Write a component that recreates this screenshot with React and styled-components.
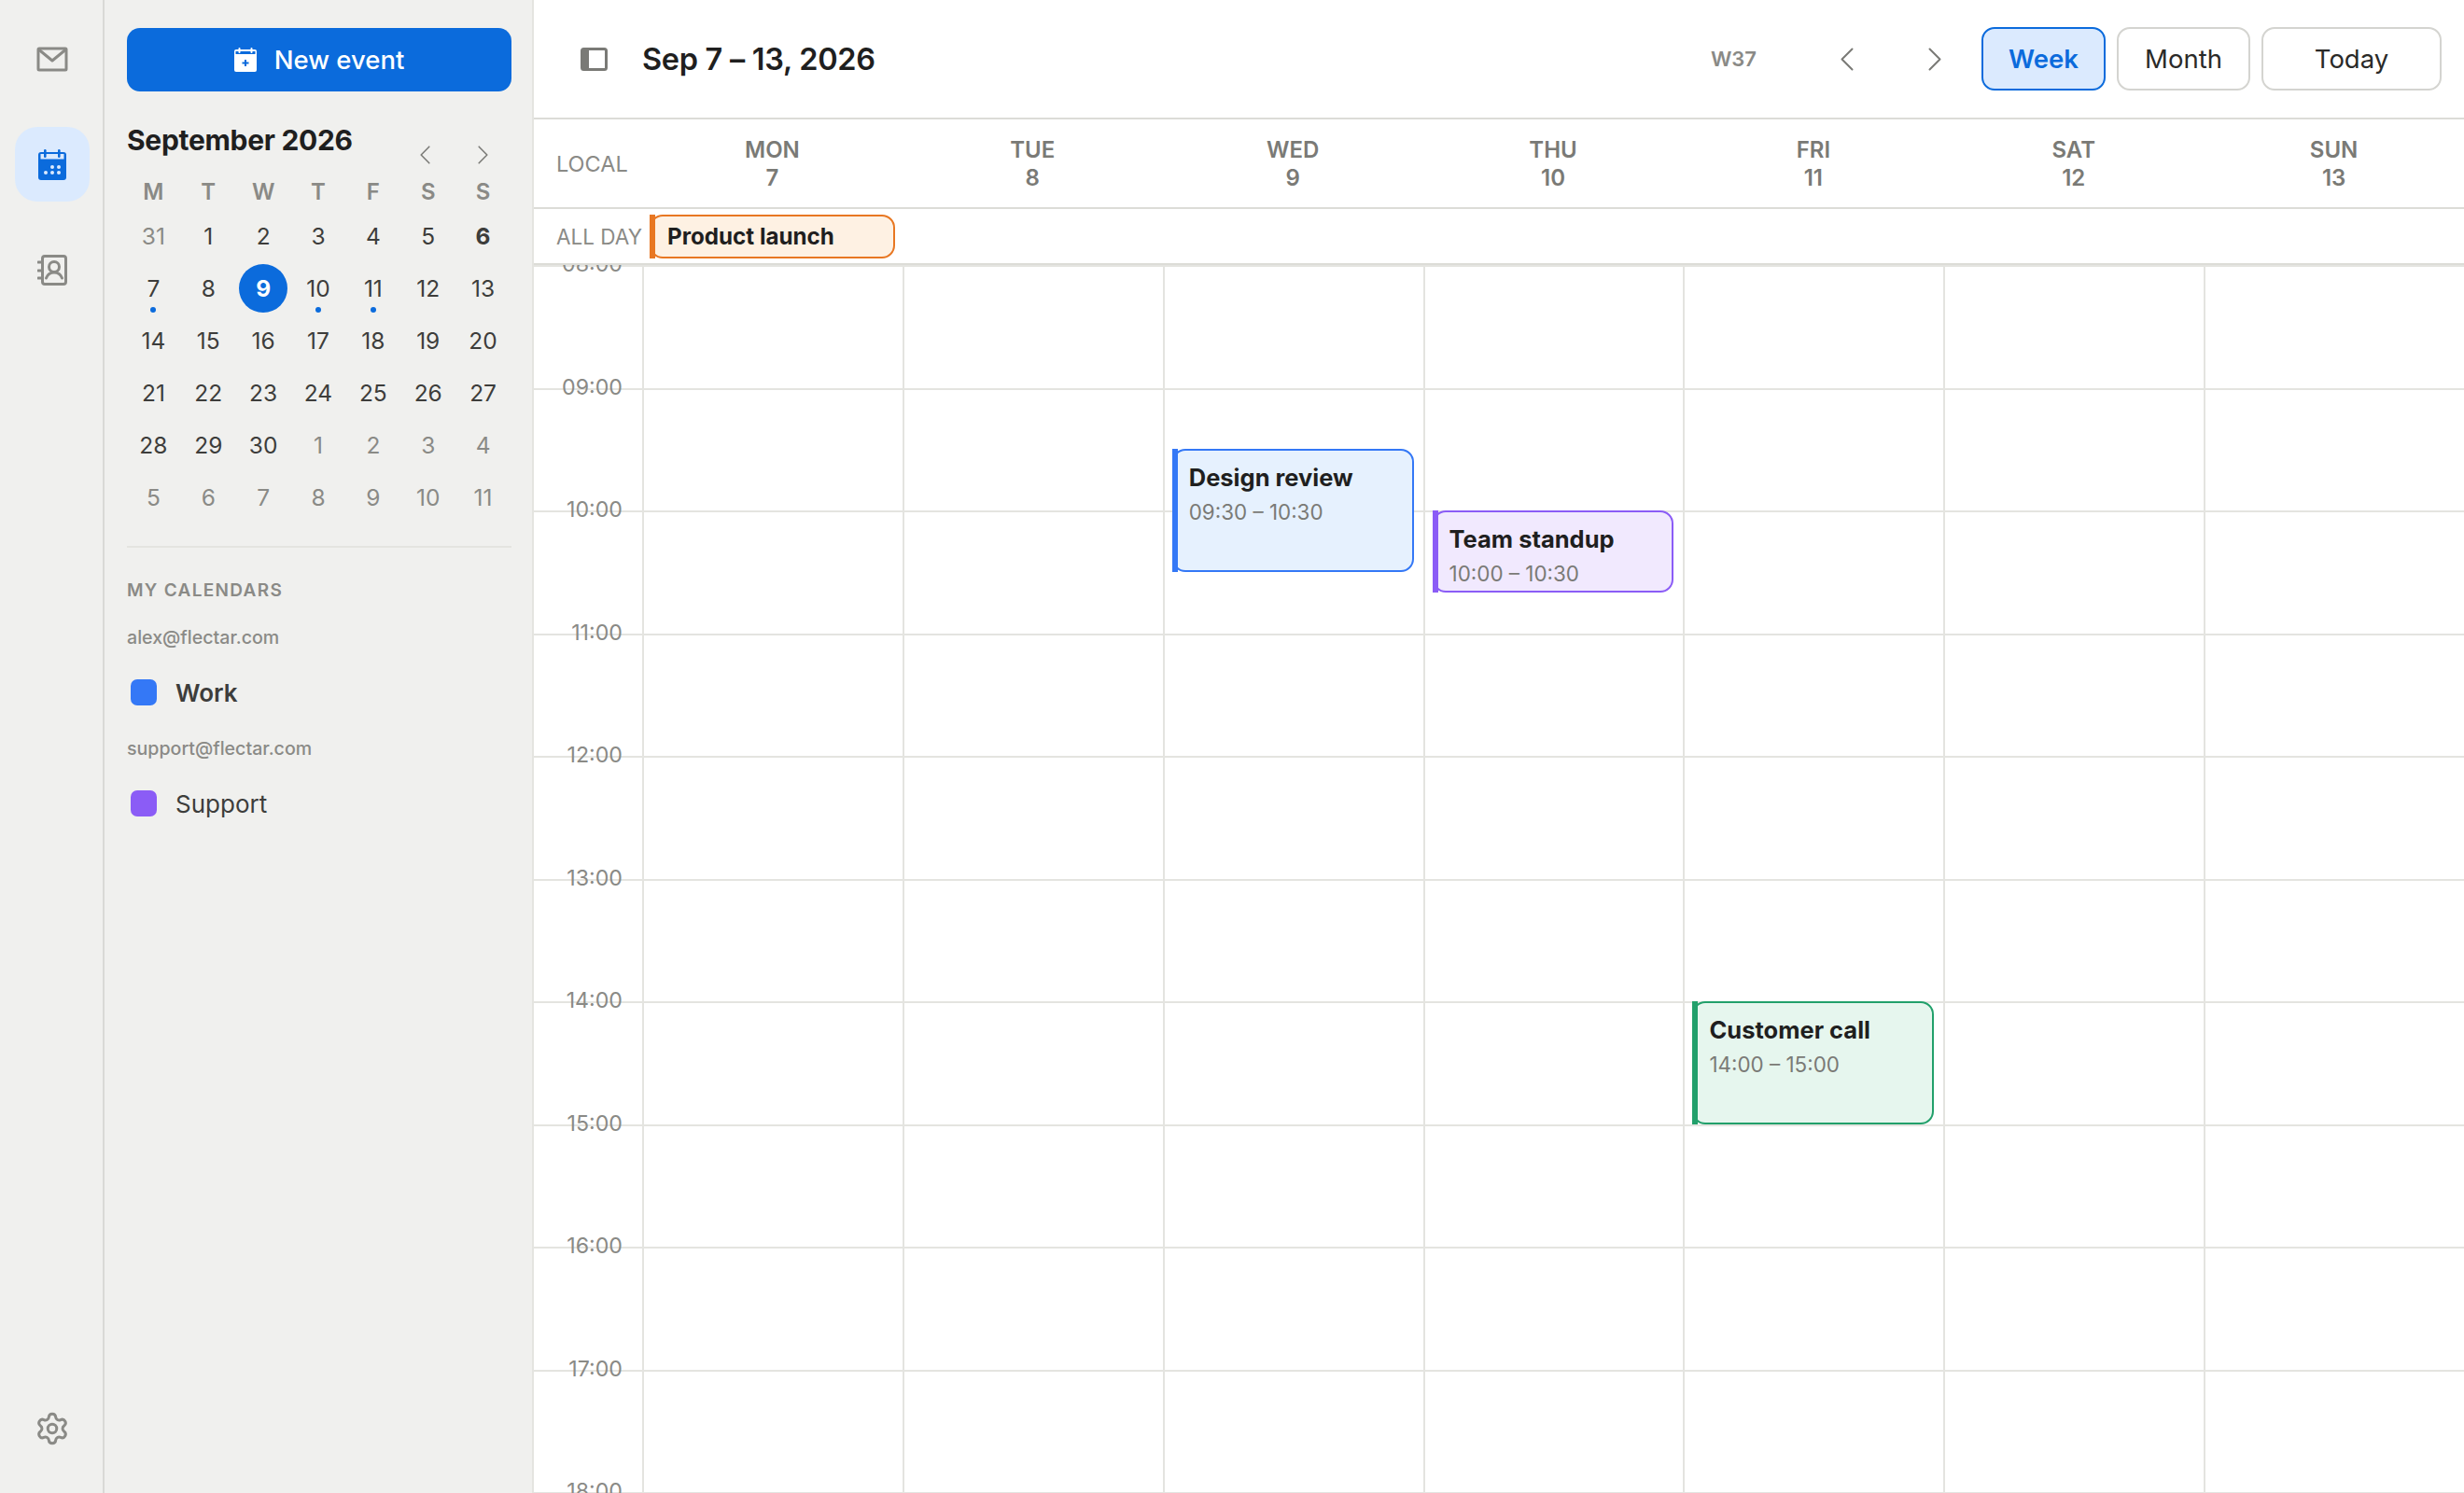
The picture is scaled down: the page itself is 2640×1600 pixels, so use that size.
import React from "react";
import styled, { createGlobalStyle } from "styled-components";
import { Settings } from "lucide-react";

const FONT = `"Inter", "Liberation Sans", sans-serif`;
const HOUR = 131.5;

const Global = createGlobalStyle`
  html, body { margin: 0; padding: 0; height: 100%; }
  body { font-family: ${FONT}; background: #fff; color: #1f1f1f; }
  #root { height: 100%; }
  * { box-sizing: border-box; }
`;

const Page = styled.div`
  display: flex;
  width: 2640px;
  height: 1600px;
  overflow: hidden;
`;

const Rail = styled.nav`
  flex: 0 0 112px;
  display: flex;
  flex-direction: column;
  align-items: center;
  gap: 33px;
  padding: 23px 0 29px 2px;
  background: #f0f0ee;
  border-right: 2px solid #d9d9d6;
`;

const RailButton = styled.button`
  display: flex;
  align-items: center;
  justify-content: center;
  width: 80px;
  height: 80px;
  padding: 0;
  border: 0;
  border-radius: 24px;
  color: #8a8a86;
  background: ${(p) => (p.$active ? "#dbeafe" : "transparent")};
  margin-top: ${(p) => (p.$bottom ? "auto" : "0")};
`;

const Sidebar = styled.aside`
  flex: 0 0 460px;
  display: flex;
  flex-direction: column;
  padding: 30px 22px 0 24px;
  background: #f0f0ee;
  border-right: 2px solid #e4e4e0;
`;

const NewEvent = styled.button`
  display: flex;
  align-items: center;
  justify-content: center;
  gap: 19px;
  height: 68px;
  border: 0;
  border-radius: 14px;
  background: #0b6bdc;
  color: #fff;
  font: 500 27.5px ${FONT};
`;

const MiniHead = styled.div`
  display: flex;
  justify-content: space-between;
  height: 55px;
  margin-top: 32px;
`;

const MonthTitle = styled.h2`
  margin: 0;
  font: 700 30px/40px ${FONT};
  letter-spacing: -0.3px;
  color: #1f1f1f;
`;

const MiniNav = styled.div`
  display: flex;
  margin-top: 16px;
`;

const IconButton = styled.button`
  display: flex;
  align-items: center;
  justify-content: center;
  width: ${(p) => p.$size}px;
  height: 40px;
  margin-left: ${(p) => p.$left || 0}px;
  margin-right: ${(p) => p.$right || 0}px;
  padding: 0;
  border: 0;
  background: transparent;
  color: #7a7a76;
`;

const MiniGrid = styled.div`
  display: grid;
  grid-template-columns: repeat(7, 1fr);
  grid-template-rows: 40px repeat(6, 56px);
  margin: 0 1px 0 -1px;
`;

const WeekLetter = styled.div`
  display: flex;
  align-items: center;
  justify-content: center;
  font: 600 24px ${FONT};
  color: #8a8a86;
`;

const DayCell = styled.div`
  position: relative;
  display: flex;
  align-items: center;
  justify-content: center;
  font-size: 24.5px;
  font-weight: ${(p) => (p.$bold ? 700 : 400)};
  color: ${(p) => (p.$muted ? "#8a8a86" : "#3d3d3b")};
`;

const Today = styled.span`
  display: flex;
  align-items: center;
  justify-content: center;
  width: 52px;
  height: 52px;
  border-radius: 50%;
  background: #0b6bdc;
  color: #fff;
  font-weight: 700;
`;

const Dot = styled.i`
  position: absolute;
  left: 50%;
  bottom: 2px;
  width: 6px;
  height: 6px;
  margin-left: -3px;
  border-radius: 50%;
  background: #0b6bdc;
`;

const Divider = styled.hr`
  width: 100%;
  height: 2px;
  margin: 24px 0 0;
  border: 0;
  background: #e4e4e0;
`;

const SectionLabel = styled.div`
  margin-top: 32px;
  font: 600 19px/28px ${FONT};
  letter-spacing: 1.3px;
  color: #8a8a86;
`;

const Account = styled.div`
  margin-top: ${(p) => p.$gap}px;
  font: 500 19.6px/30px ${FONT};
  color: #8a8a86;
`;

const CalRow = styled.div`
  display: flex;
  align-items: center;
  gap: 20px;
  height: 52px;
  margin-top: 18px;
  margin-bottom: 1px;
  padding-left: 4px;
  font-size: 26px;
  font-weight: ${(p) => (p.$strong ? 600 : 400)};
  color: #3d3d3b;
`;

const Swatch = styled.span`
  width: 28px;
  height: 28px;
  border-radius: 7px;
  background: ${(p) => p.$color};
`;

const Main = styled.main`
  flex: 1;
  display: flex;
  flex-direction: column;
  min-width: 0;
  background: #fff;
`;

const TopBar = styled.header`
  display: flex;
  align-items: center;
  flex: 0 0 128px;
  padding: 0 24px 0 50px;
  border-bottom: 2px solid #dcdcd7;
`;

const RangeTitle = styled.h1`
  margin: 0 0 0 37px;
  font: 600 32.5px ${FONT};
  letter-spacing: -0.3px;
  color: #1f1f1f;
`;

const WeekNo = styled.span`
  margin-left: auto;
  margin-right: 61px;
  font: 600 22px ${FONT};
  color: #8a8a86;
`;

const ViewButton = styled.button`
  width: ${(p) => p.$w}px;
  height: 68px;
  margin-left: 12px;
  padding: 0;
  border: 2px solid ${(p) => (p.$active ? "#0b6bdc" : "#d4d4d0")};
  border-radius: 14px;
  background: ${(p) => (p.$active ? "#dbeafe" : "#fff")};
  color: ${(p) => (p.$active ? "#0b6bdc" : "#2a2a28")};
  font: ${(p) => (p.$active ? 600 : 400)} 27.5px ${FONT};
`;

const HeadRow = styled.div`
  display: flex;
  align-items: center;
  flex: 0 0 96px;
  padding-top: 2px;
  border-bottom: 2px solid #dcdcd7;
`;

const Gutter = styled.div`
  flex: 0 0 116px;
  min-width: 0;
  margin-top: ${(p) => p.$lift || 0}px;
  padding-left: 24px;
  font-size: ${(p) => p.$size}px;
  white-space: nowrap;
  color: #8a8a86;
`;

const DayHead = styled.div`
  flex: 1;
  text-align: center;
  font: 600 24px/30px ${FONT};
  color: #7a7a76;
`;

const AllDayRow = styled.div`
  display: flex;
  align-items: center;
  flex: 0 0 60px;
  border-bottom: 2px solid #dcdcd7;
`;

const AllDayCell = styled.div`
  flex: 0 0 calc((100% - 116px) / 7);
  padding: 0 8px;
`;

const Accented = styled.div`
  position: relative;
  border: 2px solid ${(p) => p.$color};
  border-radius: 14px;
  background: ${(p) => p.$bg};
  &::before {
    content: "";
    position: absolute;
    top: -2px;
    bottom: -2px;
    left: -2px;
    width: 6px;
    background: ${(p) => p.$color};
  }
`;

const AllDayEvent = styled(Accented)`
  display: flex;
  align-items: center;
  height: 47px;
  padding-left: 17px;
  font: 700 24.2px ${FONT};
  color: #1f1f1f;
`;

const Body = styled.div`
  flex: 1;
  display: flex;
  min-height: 0;
  overflow: hidden;
`;

const TimeColumn = styled.div`
  flex: 0 0 116px;
`;

const DayColumn = styled.div`
  position: relative;
  flex: 1;
  border-left: 2px solid #e4e4e0;
`;

const HourSlot = styled.div`
  height: ${HOUR}px;
  border-top: 2px solid #e4e4e0;
`;

const TimeSlot = styled(HourSlot)`
  display: flex;
  justify-content: flex-end;
  padding-right: 21px;
`;

const TimeLabel = styled.span`
  transform: translateY(-50%) translateY(-3px);
  height: 32px;
  font-size: 23.2px;
  line-height: 32px;
  color: #8a8a86;
`;

const EventCard = styled(Accented)`
  position: absolute;
  left: 8px;
  right: 10px;
  padding: 12px 8px 0 16px;
`;

const EventTitle = styled.div`
  font: 700 25.5px/34px ${FONT};
  color: #1f1f1f;
`;

const EventTime = styled.div`
  margin-top: 4px;
  font: 400 22.4px/32px ${FONT};
  color: #7a7a76;
`;

const Chevron = ({ dir, w, h }) => (
  <svg width={w} height={h} viewBox="0 0 14 25" fill="none" stroke="currentColor" strokeWidth="2" strokeLinecap="round" strokeLinejoin="round" preserveAspectRatio="none">
    <polyline points={dir === "left" ? "12.5,1.5 1.5,12.5 12.5,23.5" : "1.5,1.5 12.5,12.5 1.5,23.5"} />
  </svg>
);

const MailIcon = () => (
  <svg width="34" height="27" viewBox="0 0 34 27" fill="none" stroke="currentColor" strokeWidth="3" strokeLinejoin="round">
    <rect x="2" y="2" width="30" height="23" rx="1" />
    <polyline points="3,3.5 17,15 31,3.5" />
  </svg>
);

const CalendarIcon = () => (
  <svg width="30" height="33" viewBox="0 0 30 33" style={{ color: "#0b6bdc" }}>
    <rect x="0" y="3" width="30" height="30" rx="3" fill="currentColor" />
    <rect x="2.5" y="5" width="25" height="5.5" fill="#dbeafe" />
    <rect x="6" y="0" width="2.6" height="9" rx="1.3" fill="currentColor" />
    <rect x="21" y="0" width="2.6" height="9" rx="1.3" fill="currentColor" />
    <g fill="#dbeafe">
      <circle cx="15" cy="19" r="2" />
      <circle cx="22" cy="19" r="2" />
      <circle cx="8" cy="25" r="2" />
      <circle cx="15" cy="25" r="2" />
      <circle cx="22" cy="25" r="2" />
    </g>
  </svg>
);

const ContactsIcon = () => (
  <svg width="32" height="33" viewBox="0 0 32 33" fill="none" stroke="currentColor" strokeWidth="3" strokeLinecap="round">
    <rect x="5.5" y="1.5" width="25" height="30" rx="2.5" />
    <path d="M1 8h4M1 17h4M1 25h4" />
    <circle cx="18" cy="13" r="5.5" />
    <path d="M9.5 25c1.5-4 4.5-6 8.5-6s7 2 8.5 6" />
  </svg>
);

const NewEventIcon = () => (
  <svg width="24" height="26" viewBox="0 0 24 26">
    <rect x="0" y="2" width="24" height="24" rx="2" fill="#fff" />
    <rect x="1.5" y="4" width="21" height="3" fill="#0b6bdc" />
    <rect x="4.5" y="0" width="2" height="6" rx="1" fill="#fff" />
    <rect x="17.5" y="0" width="2" height="6" rx="1" fill="#fff" />
    <path d="M12 13v7M8.5 16.5h7" stroke="#0b6bdc" strokeWidth="2" />
  </svg>
);

const PanelIcon = () => (
  <svg width="29" height="25" viewBox="0 0 29 25" fill="none">
    <rect x="1.5" y="1.5" width="26" height="22" rx="2" stroke="#7a7a76" strokeWidth="3" />
    <path d="M2 2h7v21H2z" fill="#7a7a76" />
  </svg>
);

const letters = ["M", "T", "W", "T", "F", "S", "S"];
const miniDays = [
  [31, 1], [1], [2], [3], [4], [5], [6, 0, 1],
  [7, 0, 0, 1], [8], [9, 0, 0, 0, 1], [10, 0, 0, 1], [11, 0, 0, 1], [12], [13],
  [14], [15], [16], [17], [18], [19], [20],
  [21], [22], [23], [24], [25], [26], [27],
  [28], [29], [30], [1, 1], [2, 1], [3, 1], [4, 1],
  [5, 1], [6, 1], [7, 1], [8, 1], [9, 1], [10, 1], [11, 1],
];
const days = [["MON", 7], ["TUE", 8], ["WED", 9], ["THU", 10], ["FRI", 11], ["SAT", 12], ["SUN", 13]];
const hours = ["08:00", "09:00", "10:00", "11:00", "12:00", "13:00", "14:00", "15:00", "16:00", "17:00", "18:00"];
const events = {
  2: { title: "Design review", time: "09:30 – 10:30", start: 1.5, height: 132, color: "#3478f6", bg: "#e6f1fe" },
  3: { title: "Team standup", time: "10:00 – 10:30", start: 2, height: 88, color: "#8b5cf6", bg: "#f1e9fe" },
  4: { title: "Customer call", time: "14:00 – 15:00", start: 6, height: 132, color: "#22a06b", bg: "#e6f6ee" },
};

export default function App() {
  return (
    <Page>
      <Global />
      <Rail>
        <RailButton><MailIcon /></RailButton>
        <RailButton $active><CalendarIcon /></RailButton>
        <RailButton><ContactsIcon /></RailButton>
        <RailButton $bottom><Settings size={38} strokeWidth={1.9} /></RailButton>
      </Rail>
      <Sidebar>
        <NewEvent><NewEventIcon />New event</NewEvent>
        <MiniHead>
          <MonthTitle>September 2026</MonthTitle>
          <MiniNav>
            <IconButton $size={62}><Chevron dir="left" w={11} h={20} /></IconButton>
            <IconButton $size={62}><Chevron dir="right" w={11} h={20} /></IconButton>
          </MiniNav>
        </MiniHead>
        <MiniGrid>
          {letters.map((l, i) => <WeekLetter key={i}>{l}</WeekLetter>)}
          {miniDays.map(([n, muted, bold, dot, today], i) => (
            <DayCell key={i} $muted={!!muted} $bold={!!bold}>
              {today ? <Today>{n}</Today> : n}
              {dot ? <Dot /> : null}
            </DayCell>
          ))}
        </MiniGrid>
        <Divider />
        <SectionLabel>MY CALENDARS</SectionLabel>
        <Account $gap={21}>alex@flectar.com</Account>
        <CalRow $strong><Swatch $color="#3478f6" />Work</CalRow>
        <Account $gap={18}>support@flectar.com</Account>
        <CalRow><Swatch $color="#8b5cf6" />Support</CalRow>
      </Sidebar>
      <Main>
        <TopBar>
          <PanelIcon />
          <RangeTitle>Sep 7 – 13, 2026</RangeTitle>
          <WeekNo>W37</WeekNo>
          <IconButton $size={72}><Chevron dir="left" w={14} h={25} /></IconButton>
          <IconButton $size={72} $left={22} $right={2}><Chevron dir="right" w={14} h={25} /></IconButton>
          <ViewButton $active $w={133}>Week</ViewButton>
          <ViewButton $w={143}>Month</ViewButton>
          <ViewButton $w={193}>Today</ViewButton>
        </TopBar>
        <HeadRow>
          <Gutter $size={23.5} $lift={-2}>LOCAL</Gutter>
          {days.map(([d, n]) => <DayHead key={d}>{d}<br />{n}</DayHead>)}
        </HeadRow>
        <AllDayRow>
          <Gutter $size={22.5}>ALL DAY</Gutter>
          <AllDayCell>
            <AllDayEvent $color="#e87722" $bg="#fef1e3">Product launch</AllDayEvent>
          </AllDayCell>
        </AllDayRow>
        <Body>
          <TimeColumn>
            {hours.map((h) => <TimeSlot key={h}><TimeLabel>{h}</TimeLabel></TimeSlot>)}
          </TimeColumn>
          {days.map(([d], i) => (
            <DayColumn key={d}>
              {hours.map((h) => <HourSlot key={h} />)}
              {events[i] && (
                <EventCard
                  $color={events[i].color}
                  $bg={events[i].bg}
                  style={{ top: events[i].start * HOUR, height: events[i].height }}
                >
                  <EventTitle>{events[i].title}</EventTitle>
                  <EventTime>{events[i].time}</EventTime>
                </EventCard>
              )}
            </DayColumn>
          ))}
        </Body>
      </Main>
    </Page>
  );
}
